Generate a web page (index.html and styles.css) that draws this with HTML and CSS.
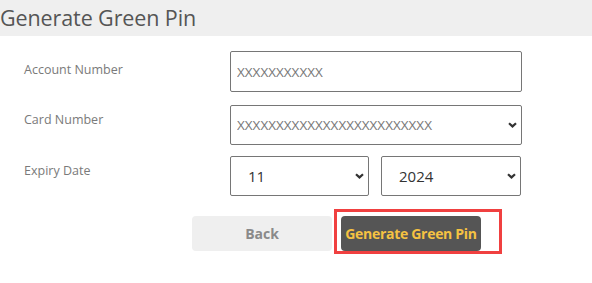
FILE: index.html
```html
<!DOCTYPE html>
<html lang="en">
<head>
<meta charset="utf-8">
<title>Generate Green Pin</title>
<link rel="stylesheet" href="styles.css">
</head>
<body>
<header class="page-header">
  <h1 class="page-title">Generate Green Pin</h1>
</header>
<form class="pin-form">
  <div class="form-row row-account">
    <label class="form-label" for="acc">Account Number</label>
    <div class="field">
      <input id="acc" class="text-input" type="text" value="XXXXXXXXXXX">
    </div>
  </div>
  <div class="form-row row-card">
    <label class="form-label" for="card">Card Number</label>
    <div class="field select-wrap">
      <select id="card" class="select select-card">
        <option>XXXXXXXXXXXXXXXXXXXXXXXXX</option>
      </select>
      <svg class="chevron" width="9" height="6" viewBox="0 0 9 6"><path d="M1 1.2 L4.5 4.4 L8 1.2" fill="none" stroke="#333" stroke-width="2.2"/></svg>
    </div>
  </div>
  <div class="form-row row-expiry">
    <label class="form-label" for="month">Expiry Date</label>
    <div class="field split">
      <div class="select-wrap month">
        <select id="month" class="select select-date">
          <option>11</option>
        </select>
        <svg class="chevron" width="9" height="6" viewBox="0 0 9 6"><path d="M1 1.2 L4.5 4.4 L8 1.2" fill="none" stroke="#333" stroke-width="2.2"/></svg>
      </div>
      <div class="select-wrap year">
        <select class="select select-date">
          <option>2024</option>
        </select>
        <svg class="chevron" width="9" height="6" viewBox="0 0 9 6"><path d="M1 1.2 L4.5 4.4 L8 1.2" fill="none" stroke="#333" stroke-width="2.2"/></svg>
      </div>
    </div>
  </div>
  <div class="actions">
    <button type="button" class="btn btn-back">Back</button>
    <span class="highlight">
      <button type="button" class="btn btn-generate">Generate Green Pin</button>
    </span>
  </div>
</form>
</body>
</html>
```
FILE: styles.css
```css
* { box-sizing: border-box; }
html, body { margin: 0; padding: 0; background: #fff; }
body {
  font-family: "Open Sans", "Noto Sans", sans-serif;
  color: #555;
}
.page-header {
  background: #efefef;
  height: 36px;
  display: flex;
  align-items: center;
}
.page-title {
  margin: 0;
  font-size: 21.5px;
  font-weight: 400;
  color: #555;
  line-height: 36px;
  letter-spacing: -0.1px;
}
.pin-form {
  padding-top: 15px;
}
.form-row {
  display: flex;
  align-items: flex-start;
}
.row-card { margin-top: 13px; }
.row-expiry { margin-top: 11px; }
.form-label {
  width: 230px;
  padding-left: 24px;
  padding-top: 6px;
  font-size: 12.5px;
  color: #7a7a7a;
  line-height: 18px;
}
.row-account .form-label { padding-top: 10px; }
.field {
  width: 292px;
}
.text-input {
  width: 100%;
  height: 41px;
  border: 1px solid #767676;
  border-radius: 2px;
  padding: 0 6px;
  font-family: inherit;
  font-size: 13.5px;
  color: #777;
  outline: none;
}
.select-wrap {
  position: relative;
}
.select {
  -webkit-appearance: none;
  appearance: none;
  width: 100%;
  height: 40px;
  border: 1px solid #767676;
  border-radius: 2px;
  background: #fff;
  font-family: inherit;
  outline: none;
}
.select-card {
  padding: 0 6px;
  font-size: 13.5px;
  color: #777;
}
.select-date {
  padding: 0 17px;
  font-size: 15px;
  color: #333;
}
.chevron {
  position: absolute;
  right: 5px;
  top: 17px;
  pointer-events: none;
}
.split {
  display: flex;
  gap: 12px;
}
.month { width: 139px; }
.year { width: 140px; }
.actions {
  display: flex;
  align-items: flex-start;
  padding-left: 192px;
  margin-top: 13px;
}
.btn {
  width: 140px;
  height: 35px;
  padding: 0;
  border: none;
  border-radius: 4px;
  font-family: inherit;
  font-weight: 700;
  font-size: 14px;
  white-space: nowrap;
  cursor: pointer;
}
.btn-back {
  margin-top: 7px;
  background: #efefef;
  color: #8a8a8a;
}
.highlight {
  display: inline-flex;
  margin-left: 2px;
  border: 3px solid #f04040;
  padding: 4px 18px 0 4px;
}
.btn-generate {
  background: #555;
  color: #f5c242;
  letter-spacing: -0.3px;
}
```
